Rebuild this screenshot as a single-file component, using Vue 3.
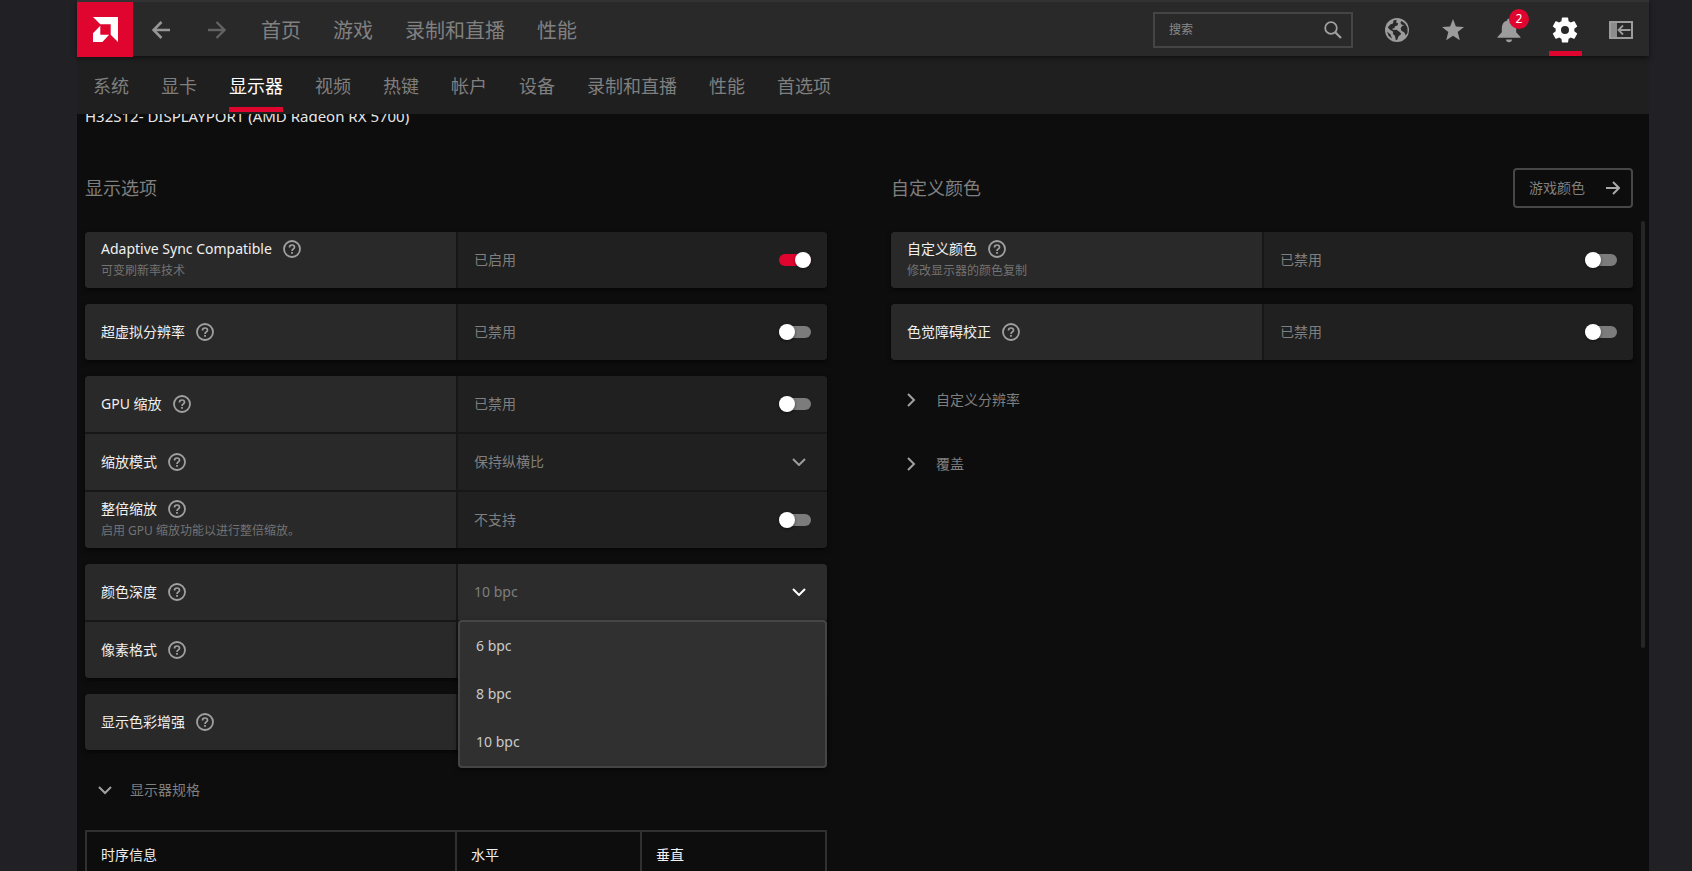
<script setup>
import { ref } from 'vue'

const mainNav = ['首页', '游戏', '录制和直播', '性能']
const tabs = ['系统', '显卡', '显示器', '视频', '热键', '帐户', '设备', '录制和直播', '性能', '首选项']
const activeTab = ref('显示器')

const displayGroups = ref([
  [{ id: 'sync', label: 'Adaptive Sync Compatible', hint: '可变刷新率技术', type: 'toggle', text: '已启用', on: true }],
  [{ id: 'vsr', label: '超虚拟分辨率', type: 'toggle', text: '已禁用', on: false }],
  [
    { id: 'gpu', label: 'GPU 缩放', type: 'toggle', text: '已禁用', on: false },
    { id: 'mode', label: '缩放模式', type: 'select', text: '保持纵横比', options: ['保持纵横比'] },
    { id: 'integer', label: '整倍缩放', hint: '启用 GPU 缩放功能以进行整倍缩放。', type: 'toggle', text: '不支持', on: false },
  ],
  [
    { id: 'depth', label: '颜色深度', type: 'select', text: '10 bpc', options: ['6 bpc', '8 bpc', '10 bpc'], open: true },
    { id: 'format', label: '像素格式', type: 'none' },
  ],
  [{ id: 'enhance', label: '显示色彩增强', type: 'none' }],
])

const colorGroups = ref([
  [{ id: 'custom', label: '自定义颜色', hint: '修改显示器的颜色复制', type: 'toggle', text: '已禁用', on: false }],
  [{ id: 'cvd', label: '色觉障碍校正', type: 'toggle', text: '已禁用', on: false }],
])

const columns = [
  { title: '显示选项', groups: displayGroups, expanders: [{ label: '显示器规格', open: true }] },
  {
    title: '自定义颜色',
    action: '游戏颜色',
    groups: colorGroups,
    expanders: [{ label: '自定义分辨率', open: false }, { label: '覆盖', open: false }],
  },
]

function choose(row, option) {
  row.text = option
  row.open = false
}
</script>

<template>
  <div class="desktop">
    <div class="window">
      <header class="topbar">
        <a class="logo" href="#" aria-label="AMD">
          <svg width="25" height="25" viewBox="0 0 24 24" fill="#fff">
            <path d="M0 0H24V24L17 17V7H7Z" />
            <path d="M7 8.500V17H15.500L9 24H0V15.500Z" />
          </svg>
        </a>
        <button class="icon-btn" aria-label="后退">
          <svg width="18" height="18" viewBox="0 0 18 18" fill="none" stroke="#969696" stroke-width="2.600">
            <path d="M18 9H2M9.500 1L1.500 9L9.500 17" />
          </svg>
        </button>
        <button class="icon-btn" aria-label="前进">
          <svg width="18" height="18" viewBox="0 0 18 18" fill="none" stroke="#626262" stroke-width="2.400">
            <path d="M0 9H16M8.500 1L16.500 9L8.500 17" />
          </svg>
        </button>
        <nav class="main-nav">
          <a v-for="item in mainNav" :key="item" href="#">{{ item }}</a>
        </nav>
        <label class="search">
          <input type="text" placeholder="搜索" aria-label="搜索" />
          <svg width="18" height="18" viewBox="0 0 18 18" fill="none" stroke="#a0a0a0">
            <circle cx="7" cy="7" r="5.800" stroke-width="1.800" />
            <path d="M11.200 11.200L17 17" stroke-width="2.200" />
          </svg>
        </label>
        <div class="tools">
          <button class="icon-btn" aria-label="网页">
            <svg width="26" height="26" viewBox="0 0 26 26">
              <circle cx="13" cy="13" r="12" fill="#9c9c9c" />
              <path fill="#292929" d="M9.500 3.600L12.800 2.800L12 5.500L14.200 6.200L13.500 8.600L11 9.200L10.400 11.200L8 11.800L9.400 13L12.600 12.800L16 15.200L17.200 17L14.600 19.200L13.200 22.800L11.800 23.200L11 19L8.800 16.800L9.200 14.800L5.600 12.400L3.800 10.200L6.600 7.200L9 6.600Z" />
              <path fill="#292929" d="M17.600 4L21 6.400L23.400 10.400L23.600 15.400L21.800 18.600L20.200 15.200L17.600 14L16.600 11.200L18.400 8.800L20.400 8.200L17.400 7.400L16.400 5.600Z" />
              <path fill="#292929" d="M3 14.500L6.500 17.500L8 21.800L4.600 18.800Z" />
            </svg>
          </button>
          <button class="icon-btn" aria-label="收藏">
            <svg width="24" height="24" viewBox="0 0 24 24" fill="#9c9c9c">
              <path d="M12 1L14.900 8.600L23 9L16.700 14.100L18.800 22.200L12 17.700L5.200 22.200L7.300 14.100L1 9L9.100 8.600Z" />
            </svg>
          </button>
          <button class="icon-btn" aria-label="通知">
            <svg width="24" height="26" viewBox="0 0 24 26" fill="#9c9c9c">
              <path d="M12 1.500C13.200 1.500 13.800 2.400 13.800 3.400C17.400 4.300 19.200 7.200 19.200 11V15.200L23.500 20V20.800H0.500V20L4.800 15.200V11C4.800 7.200 6.600 4.300 10.200 3.400C10.200 2.400 10.800 1.500 12 1.500ZM9 22.400H15C15 24.200 13.700 25.200 12 25.200C10.300 25.200 9 24.200 9 22.400Z" />
            </svg>
            <span class="badge">2</span>
          </button>
          <button class="icon-btn current" aria-label="设置">
            <svg width="30" height="30" viewBox="0 0 24 24" fill="#fff">
              <path d="M19.430 12.980c.04-.32.07-.64.07-.98s-.03-.66-.07-.98l2.110-1.650c.19-.15.24-.42.12-.64l-2-3.460c-.12-.22-.39-.3-.61-.22l-2.490 1c-.52-.4-1.080-.73-1.690-.98l-.38-2.650C14.460 2.180 14.250 2 14 2h-4c-.25 0-.46.18-.49.42l-.38 2.650c-.61.25-1.170.59-1.690.98l-2.490-1c-.23-.09-.49 0-.61.22l-2 3.460c-.13.22-.07.49.12.64l2.110 1.650c-.04.32-.07.65-.07.98s.03.66.07.98l-2.110 1.650c-.19.15-.24.42-.12.64l2 3.460c.12.22.39.3.61.22l2.490-1c.52.4 1.080.73 1.690.98l.38 2.650c.03.24.24.42.49.42h4c.25 0 .46-.18.49-.42l.38-2.650c.61-.25 1.170-.59 1.690-.98l2.490 1c.23.09.49 0 .61-.22l2-3.460c.12-.22.07-.49-.12-.64l-2.110-1.650zM12 15.200A3.200 3.200 0 1 1 12 8.800a3.200 3.200 0 0 1 0 6.400z" />
            </svg>
          </button>
          <button class="icon-btn" aria-label="侧边栏">
            <svg width="24" height="18" viewBox="0 0 24 18" fill="none" stroke="#9c9c9c">
              <path d="M0 0H8V18H0Z" fill="#8c8c8c" stroke="none" />
              <path d="M1 1H23V17H1Z" stroke-width="2" />
              <path d="M21.500 9H10M14 4.500L9.500 9L14 13.500" stroke-width="1.800" />
            </svg>
          </button>
        </div>
      </header>

      <nav class="tabs">
        <a v-for="tab in tabs" :key="tab" href="#" :class="{ active: tab === activeTab }" @click.prevent="activeTab = tab">{{ tab }}</a>
      </nav>

      <main class="content">
        <h1 class="device">H32S12- DISPLAYPORT (AMD Radeon RX 5700)</h1>
        <div class="columns">
          <section v-for="col in columns" :key="col.title" class="column">
            <div class="section-head">
              <h2>{{ col.title }}</h2>
              <button v-if="col.action" class="outline-btn">
                {{ col.action }}
                <svg width="14" height="14" viewBox="0 0 14 14" fill="none" stroke="#a8a8a8" stroke-width="2">
                  <path d="M0 7H12.500M7 1L13 7L7 13" />
                </svg>
              </button>
            </div>
            <div class="groups">
              <div v-for="(group, g) in col.groups.value" :key="g" class="group">
                <div v-for="row in group" :key="row.id" class="row">
                  <div class="cell name">
                    <div class="name-line">
                      <label :for="row.id">{{ row.label }}</label>
                      <button class="help" :aria-label="row.label">
                        <svg width="18" height="18" viewBox="0 0 18 18" fill="none" stroke="#a0a0a0">
                          <circle cx="9" cy="9" r="8" stroke-width="1.800" />
                          <path d="M6.500 7.400C6.500 5.900 7.600 5 9 5C10.400 5 11.500 5.900 11.500 7.200C11.500 8.800 9 8.900 9 10.900" stroke-width="1.700" />
                          <path d="M9 12V13.800" stroke-width="1.800" />
                        </svg>
                      </button>
                    </div>
                    <p v-if="row.hint" class="hint">{{ row.hint }}</p>
                  </div>
                  <div class="cell value" :class="{ open: row.open }">
                    <template v-if="row.type === 'toggle'">
                      <span>{{ row.text }}</span>
                      <input :id="row.id" v-model="row.on" class="toggle" type="checkbox" role="switch" />
                    </template>
                    <template v-else-if="row.type === 'select'">
                      <select :id="row.id" v-model="row.text">
                        <option v-for="o in row.options" :key="o">{{ o }}</option>
                      </select>
                      <svg class="chevron" width="14" height="8" viewBox="0 0 14 8" fill="none" stroke="currentColor" stroke-width="2">
                        <path d="M1 1L7 7L13 1" />
                      </svg>
                      <ul v-if="row.open" class="menu">
                        <li v-for="o in row.options" :key="o">
                          <button @click="choose(row, o)">{{ o }}</button>
                        </li>
                      </ul>
                    </template>
                  </div>
                </div>
              </div>
            </div>
            <div class="expanders">
              <button v-for="ex in col.expanders" :key="ex.label" class="expander" :aria-expanded="ex.open">
                <svg width="14" height="14" viewBox="0 0 14 14" fill="none" stroke="#a0a0a0" stroke-width="2">
                  <path :d="ex.open ? 'M1 4L7 10L13 4' : 'M4 1L10 7L4 13'" />
                </svg>
                {{ ex.label }}
              </button>
            </div>
            <table v-if="!col.action" class="specs">
              <thead>
                <tr>
                  <th class="wide">时序信息</th>
                  <th>水平</th>
                  <th>垂直</th>
                </tr>
              </thead>
            </table>
          </section>
        </div>
        <div class="scrollbar"></div>
      </main>
    </div>
  </div>
</template>

<style>
body {
  margin: 0;
  background: #212025;
}
</style>

<style scoped>
.desktop {
  height: 100vh;
  padding: 0 43px 0 77px;
  box-sizing: border-box;
  overflow: hidden;
  background: #212025;
  color: #7f7f7f;
  font: 14px/20px "Noto Sans", "Noto Sans CJK SC", sans-serif;
}
.desktop *, .desktop *::before, .desktop *::after { box-sizing: border-box; }
.window {
  height: 100%;
  display: flex;
  flex-direction: column;
  background: #0d0d0d;
}
a { color: inherit; text-decoration: none; }
button, input, select { font: inherit; color: inherit; }
button {
  padding: 0;
  border: 0;
  background: none;
  cursor: pointer;
}
svg { display: block; flex: none; }
h1, h2, p, ul { margin: 0; padding: 0; font-weight: 400; }

.topbar {
  position: relative;
  z-index: 2;
  flex: none;
  display: flex;
  align-items: center;
  height: 56px;
  background: #292929;
  box-shadow: 0 2px 5px rgba(0, 0, 0, 0.5), inset 0 2px 0 #323232;
}
.logo {
  width: 56px;
  height: 55px;
  display: flex;
  align-items: center;
  justify-content: center;
  align-self: flex-start;
  margin-top: 2px;
  background: #e0052f;
}
.icon-btn {
  position: relative;
  width: 56px;
  height: 56px;
  display: flex;
  align-items: center;
  justify-content: center;
  padding-top: 4px;
}
.main-nav {
  display: flex;
  gap: 32px;
  padding: 6px 16px 0;
  font-size: 20px;
  line-height: 28px;
  color: #808080;
}
.search {
  display: flex;
  align-items: center;
  width: 200px;
  height: 36px;
  margin: 4px 16px 0 auto;
  padding: 0 9px 0 14px;
  border: 2px solid #454545;
}
.search input {
  flex: 1;
  min-width: 0;
  padding: 0;
  border: 0;
  outline: 0;
  background: none;
  font-size: 12px;
}
.search input::placeholder { color: #8a8a8a; opacity: 1; }
.tools { display: flex; }
.current::after {
  content: "";
  position: absolute;
  left: 12px;
  right: 11px;
  bottom: 0;
  height: 5px;
  background: #e0052f;
}
.badge {
  position: absolute;
  top: 9px;
  right: 8px;
  width: 20px;
  height: 20px;
  border-radius: 50%;
  background: #e0052f;
  color: #fff;
  font-size: 12px;
  line-height: 20px;
  text-align: center;
}

.tabs {
  position: relative;
  z-index: 1;
  flex: none;
  display: flex;
  gap: 32px;
  height: 58px;
  padding: 0 16px;
  background: #1f1f1f;
  font-size: 18px;
  line-height: 60px;
}
.tabs a { position: relative; }
.tabs .active { color: #fff; }
.tabs .active::after {
  content: "";
  position: absolute;
  left: 0;
  right: 0;
  bottom: 2px;
  height: 5px;
  background: #e0052f;
}

.content {
  position: relative;
  flex: 1;
  min-height: 0;
  overflow: hidden;
  padding: 0 16px 0 8px;
}
.device {
  margin: -8px 0 42px;
  font-size: 15px;
  line-height: 20px;
  color: #e6e6e6;
}
.columns {
  display: grid;
  grid-template-columns: 1fr 1fr;
  gap: 64px;
}
.section-head {
  display: flex;
  align-items: center;
  justify-content: space-between;
  height: 40px;
  margin-bottom: 24px;
}
h2 { font-size: 18px; line-height: 24px; }
.outline-btn {
  display: flex;
  align-items: center;
  justify-content: space-between;
  width: 120px;
  height: 40px;
  padding: 0 11px 0 14px;
  border: 2px solid #474747;
  border-radius: 4px;
}
.groups { display: grid; gap: 16px; }
.group {
  display: grid;
  gap: 2px;
  border-radius: 4px;
  background: #171717;
  box-shadow: 0 2px 4px rgba(0, 0, 0, 0.6);
}
.row {
  display: grid;
  grid-template-columns: 1fr 1fr;
  min-height: 56px;
}
.cell { display: flex; padding: 0 16px; min-width: 0; }
.name {
  flex-direction: column;
  justify-content: center;
  gap: 2px;
  background: #292929;
  color: #f0f0f0;
}
.row:first-child .name { border-top-left-radius: 4px; }
.row:last-child .name { border-bottom-left-radius: 4px; }
.row:first-child .value { border-top-right-radius: 4px; }
.row:last-child .value { border-bottom-right-radius: 4px; }
.name-line { display: flex; align-items: center; gap: 11px; }
.help { border-radius: 50%; }
.hint { font-size: 12px; line-height: 20px; color: #737373; }
.value {
  position: relative;
  align-items: center;
  justify-content: space-between;
  border-left: 2px solid #171717;
  background: #202020;
}
.value.open { background: #2c2c2c; }
.toggle {
  appearance: none;
  position: relative;
  width: 32px;
  height: 16px;
  margin: 0;
}
.toggle::before {
  content: "";
  position: absolute;
  inset: 2px 0;
  border-radius: 6px;
  background: #7c7c7c;
}
.toggle::after {
  content: "";
  position: absolute;
  left: 0;
  top: 0;
  width: 16px;
  height: 16px;
  border-radius: 50%;
  background: #fff;
  box-shadow: 0 1px 3px rgba(0, 0, 0, 0.5);
}
.toggle:checked::before { background: #e0052f; }
.toggle:checked::after { left: 16px; }
select {
  appearance: none;
  flex: 1;
  height: 100%;
  padding: 0;
  border: 0;
  outline: 0;
  background: none;
}
.chevron { margin-right: 5px; color: #9c9c9c; pointer-events: none; }
.open .chevron { color: #fff; }
.menu {
  position: absolute;
  z-index: 3;
  top: 100%;
  left: 0;
  right: 0;
  list-style: none;
  background: #303030;
  border: 2px solid #454545;
  border-radius: 4px;
  box-shadow: 0 2px 5px rgba(0, 0, 0, 0.5);
}
.menu button {
  width: 100%;
  height: 48px;
  padding: 0 16px;
  text-align: left;
  color: #cacaca;
}
.expanders { margin: 8px 0; }
.expander {
  display: flex;
  align-items: center;
  gap: 18px;
  width: 100%;
  height: 64px;
  padding: 0 13px;
}
.specs {
  width: 100%;
  table-layout: fixed;
  border-collapse: collapse;
  color: #f0f0f0;
}
.specs th {
  height: 48px;
  padding: 0 14px;
  border: 2px solid #303030;
  font-weight: 400;
  text-align: left;
}
.wide { width: 50%; }
.scrollbar {
  position: absolute;
  top: 107px;
  right: 4px;
  width: 4px;
  height: 427px;
  border-radius: 2px;
  background: #262626;
}
</style>
